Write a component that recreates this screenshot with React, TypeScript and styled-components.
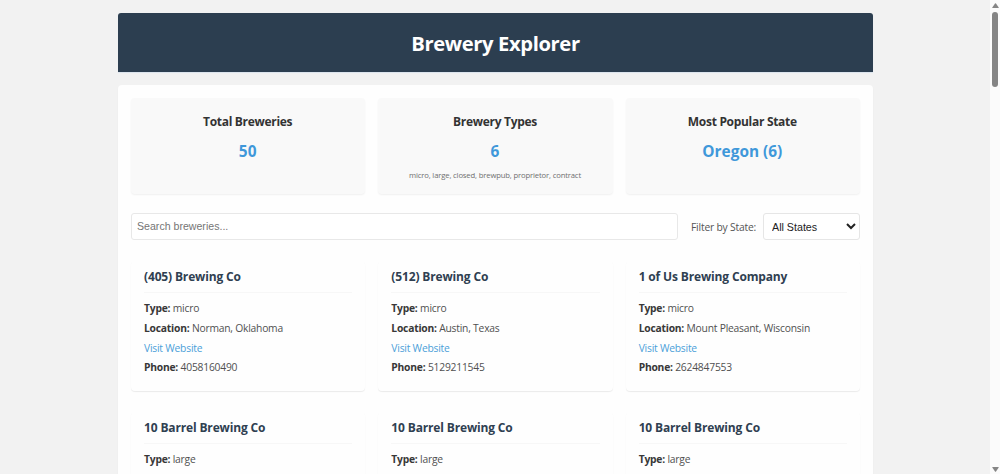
import React from "react";
import styled, { createGlobalStyle } from "styled-components";

const GlobalStyle = createGlobalStyle`
  * { box-sizing: border-box; }
  html, body { margin: 0; height: 474px; overflow: hidden; background: #f2f2f2; }
  body { font-family: "Open Sans", "Noto Sans", sans-serif; color: #3a3a3a; }
`;

const Viewport = styled.div`
  display: flex;
  height: 474px;
  overflow: hidden;
`;

const Page = styled.div`
  flex: 1;
  display: flex;
  flex-direction: column;
  gap: 13px;
  padding: 13px 117px 0 118px;
  overflow: hidden;
`;

const Header = styled.header`
  flex: none;
  height: 59px;
  display: flex;
  align-items: center;
  justify-content: center;
  background: #2c3e50;
  border-radius: 3px 3px 0 0;
  box-shadow: 0 1px 1px #dbe4ee;
`;

const PageTitle = styled.h1`
  margin: 0;
  padding-top: 1px;
  font-size: 20.2px;
  line-height: 30px;
  font-weight: 700;
  letter-spacing: -0.38px;
  color: #fff;
`;

const Panel = styled.main`
  flex: none;
  height: 500px;
  padding: 13px;
  background: #fefefe;
  border-radius: 4px;
  box-shadow: 0 1px 2px rgba(0, 0, 0, 0.04);
`;

const Columns = styled.div`
  display: grid;
  grid-template-columns: repeat(3, 1fr);
  gap: 20px 13px;
`;

const StatCard = styled.section`
  height: 96px;
  padding: 13px 1px 0 0;
  text-align: center;
  background: #f9f9f9;
  border-radius: 4px;
  box-shadow: 0 1px 2px rgba(0, 0, 0, 0.06);
`;

const StatTitle = styled.h3`
  margin: 0;
  font-size: 12px;
  line-height: 21px;
  font-weight: 700;
  letter-spacing: -0.3px;
  color: #333;
`;

const StatValue = styled.div`
  margin-top: 7px;
  font-size: 15.4px;
  line-height: 25px;
  font-weight: 700;
  color: #3f98da;
`;

const StatNote = styled.div`
  margin-top: 5px;
  font-size: 7.7px;
  line-height: 13px;
  letter-spacing: -0.16px;
  color: #707070;
`;

const Filters = styled.div`
  display: flex;
  align-items: center;
  height: 27px;
  margin: 19px 0 21px;
`;

const SearchInput = styled.input`
  flex: 1;
  min-width: 0;
  height: 27px;
  padding: 0 5px 1px;
  border: 1px solid #e8e8e8;
  border-radius: 3px;
  background: #fff;
  font-family: "Liberation Sans", sans-serif;
  font-size: 10.6px;
  &::placeholder { color: #757575; }
`;

const FilterLabel = styled.label`
  width: 72px;
  margin-left: 13px;
  font-size: 10.3px;
  letter-spacing: -0.2px;
  white-space: nowrap;
  color: #555;
`;

const StateSelect = styled.select`
  width: 97px;
  height: 27px;
  padding: 0 0 0 4px;
  border: 1px solid #e6e6e6;
  border-radius: 3px;
  background: #fff;
  font-family: "Liberation Sans", sans-serif;
  font-size: 10.7px;
  color: #222;
`;

const BreweryCard = styled.article`
  height: 130px;
  margin-bottom: 1px;
  padding: 5px 13px 0;
  border-radius: 4px;
  background: #fefefe;
  box-shadow: 0 1px 1px rgba(0, 0, 0, 0.08);
`;

const BreweryName = styled.h3`
  margin: 0 0 6px;
  height: 27px;
  border-bottom: 1px solid #f7f7f7;
  font-size: 12px;
  line-height: 21px;
  font-weight: 700;
  letter-spacing: -0.15px;
  color: #2f4051;
`;

const Detail = styled.div`
  font-size: 10.3px;
  line-height: 19.8px;
  letter-spacing: -0.22px;
  white-space: nowrap;
  color: #505050;
  b { font-weight: 700; color: #383838; }
`;

const WebsiteLink = styled.a`
  color: #4b9fd9;
  text-decoration: none;
`;

const ScrollTrack = styled.div`
  width: 10px;
  display: flex;
  flex-direction: column;
  align-items: center;
  padding: 3px 0 2px;
  background: #fbfbfb;
`;

const ScrollThumb = styled.div`
  width: 6px;
  height: 75px;
  margin: 4px 0 auto;
  border-radius: 3px;
  background: #858585;
`;

const Arrow = ({ down }: { down?: boolean }) => (
  <svg width="7" height="5" viewBox="0 0 7 5" fill="#858585">
    <path d={down ? "M.7 0h5.6q.7 0 .4.6L4 4.5q-.5.6-1 0L.3.6Q0 0 .7 0Z" : "M.7 5h5.6q.7 0 .4-.6L4 .5q-.5-.6-1 0L.3 4.4Q0 5 .7 5Z"} />
  </svg>
);

interface Brewery {
  name: string;
  type: string;
  location: string;
  phone: string;
}

const breweries: Brewery[] = [
  { name: "(405) Brewing Co", type: "micro", location: "Norman, Oklahoma", phone: "4058160490" },
  { name: "(512) Brewing Co", type: "micro", location: "Austin, Texas", phone: "5129211545" },
  { name: "1 of Us Brewing Company", type: "micro", location: "Mount Pleasant, Wisconsin", phone: "2624847553" },
  { name: "10 Barrel Brewing Co", type: "large", location: "", phone: "" },
  { name: "10 Barrel Brewing Co", type: "large", location: "", phone: "" },
  { name: "10 Barrel Brewing Co", type: "large", location: "", phone: "" },
];

const stats = [
  { title: "Total Breweries", value: "50" },
  { title: "Brewery Types", value: "6", note: "micro, large, closed, brewpub, proprietor, contract" },
  { title: "Most Popular State", value: "Oregon (6)" },
];

export default function App() {
  return (
    <>
      <GlobalStyle />
      <Viewport>
        <Page>
          <Header>
            <PageTitle>Brewery Explorer</PageTitle>
          </Header>
          <Panel>
            <Columns>
              {stats.map((s) => (
                <StatCard key={s.title}>
                  <StatTitle>{s.title}</StatTitle>
                  <StatValue>{s.value}</StatValue>
                  {s.note && <StatNote>{s.note}</StatNote>}
                </StatCard>
              ))}
            </Columns>
            <Filters>
              <SearchInput placeholder="Search breweries..." />
              <FilterLabel htmlFor="state">Filter by State:</FilterLabel>
              <StateSelect id="state">
                <option>All States</option>
              </StateSelect>
            </Filters>
            <Columns>
              {breweries.map((b, i) => (
                <BreweryCard key={i}>
                  <BreweryName>{b.name}</BreweryName>
                  <Detail><b>Type:</b> {b.type}</Detail>
                  {b.location && (
                    <>
                      <Detail><b>Location:</b> {b.location}</Detail>
                      <Detail><WebsiteLink>Visit Website</WebsiteLink></Detail>
                      <Detail><b>Phone:</b> {b.phone}</Detail>
                    </>
                  )}
                </BreweryCard>
              ))}
            </Columns>
          </Panel>
        </Page>
        <ScrollTrack>
          <Arrow />
          <ScrollThumb />
          <Arrow down />
        </ScrollTrack>
      </Viewport>
    </>
  );
}
